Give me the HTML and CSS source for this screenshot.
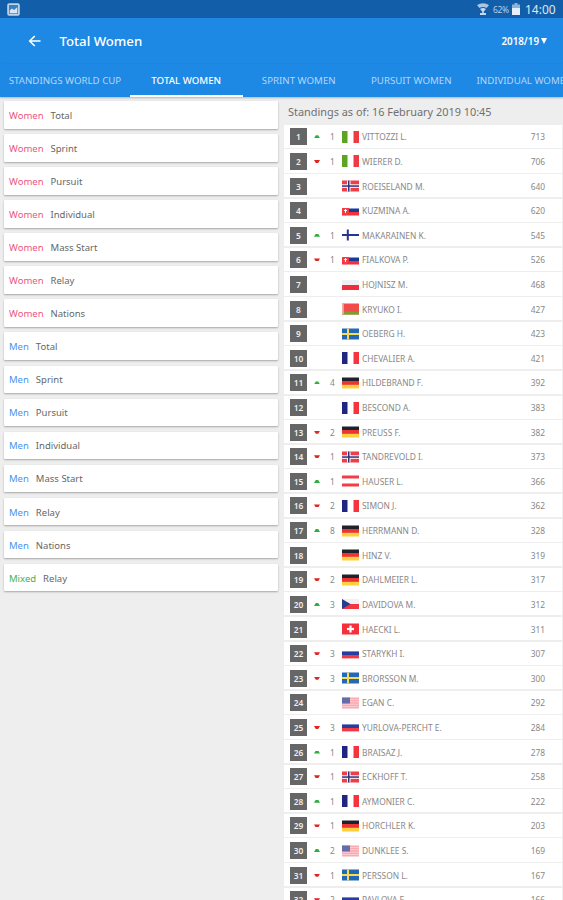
FILE: index.html
```html
<!DOCTYPE html>
<html lang="en">
<head>
    <meta charset="UTF-8">
    <meta name="viewport" content="width=device-width, initial-scale=1.0">
    <title>Total Women</title>
    <link rel="stylesheet" href="styles.css">
</head>
<body>
    <!-- Status bar -->
    <div class="status-bar">
        <svg class="icon-picture" viewBox="0 0 12 12"><rect x="1" y="1" width="10" height="10" rx="1" fill="#3f7fc0" stroke="#bcd3ea" stroke-width="1.6"/><path d="M2.5 9.5V7l2-2 2 1.5 3-2.5v5.5z" fill="#d6e5f4"/></svg>
        <div class="status-right">
            <svg class="icon-wifi" viewBox="0 0 12 12"><path d="M0 2Q6-1.6 12 2L9.6 5Q6 3 2.4 5z" fill="#a9c6e4"/><path d="M3 6Q6 4 9 6L6.8 8.6V10H9v2H3v-2h2.2V8.6z" fill="#c3d8ee"/></svg>
            <span class="percent">62%</span>
            <svg class="icon-battery" viewBox="0 0 8 12"><path d="M2.5 0h3v1.5H8V12H0V1.5h2.5z" fill="#8eb2d8"/><path d="M0 5h8v7H0z" fill="#e6f0fa"/></svg>
            <span class="clock">14:00</span>
        </div>
    </div>

    <header class="toolbar">
        <svg class="icon-back" viewBox="0 0 12 12"><path d="M6.3 1L1.2 6l5.1 5M1.5 6H12" fill="none" stroke="#fff" stroke-width="1.6"/></svg>
        <h1>Total Women</h1>
        <div class="season"><span>2018/19</span><i class="caret"></i></div>
    </header>

    <nav class="tabs">
        <a class="tab tab-first"><span>STANDINGS WORLD CUP</span></a>
        <a class="tab active"><span>TOTAL WOMEN</span></a>
        <a class="tab"><span>SPRINT WOMEN</span></a>
        <a class="tab"><span>PURSUIT WOMEN</span></a>
        <a class="tab tab-last"><span>INDIVIDUAL WOMEN</span></a>
    </nav>

    <main class="content">
        <div class="menu">
            <div class="card"><span class="women">Women</span><span>Total</span></div>
            <div class="card"><span class="women">Women</span><span>Sprint</span></div>
            <div class="card"><span class="women">Women</span><span>Pursuit</span></div>
            <div class="card"><span class="women">Women</span><span>Individual</span></div>
            <div class="card"><span class="women">Women</span><span>Mass Start</span></div>
            <div class="card"><span class="women">Women</span><span>Relay</span></div>
            <div class="card"><span class="women">Women</span><span>Nations</span></div>
            <div class="card"><span class="men">Men</span><span>Total</span></div>
            <div class="card"><span class="men">Men</span><span>Sprint</span></div>
            <div class="card"><span class="men">Men</span><span>Pursuit</span></div>
            <div class="card"><span class="men">Men</span><span>Individual</span></div>
            <div class="card"><span class="men">Men</span><span>Mass Start</span></div>
            <div class="card"><span class="men">Men</span><span>Relay</span></div>
            <div class="card"><span class="men">Men</span><span>Nations</span></div>
            <div class="card"><span class="mixed">Mixed</span><span>Relay</span></div>
        </div>
        <div class="standings">
            <h2>Standings as of: 16 February 2019 10:45</h2>
            <div id="rows"></div>
        </div>
    </main>

    <script src="script.js"></script>
</body>
</html>
```
FILE: styles.css
```css
body {
    font-family: "Noto Sans", sans-serif;
    margin: 0;
    height: 900px;
    overflow: hidden;
    background-color: #eee;
    color: #666;
}
svg {
    display: block;
}
.status-bar {
    display: flex;
    align-items: center;
    justify-content: space-between;
    height: 18px;
    padding: 0 7px;
    box-sizing: border-box;
    background-color: #135ea9;
    color: #dce9f6;
}
.icon-picture {
    width: 13px;
    height: 13px;
}
.status-right {
    display: flex;
    align-items: center;
}
.icon-wifi {
    width: 12px;
    height: 12px;
}
.percent {
    width: 17px;
    margin: 0 2px 0 4px;
    font-size: 8.5px;
    letter-spacing: -0.3px;
    color: #b5cfe9;
}
.icon-battery {
    width: 8px;
    height: 12px;
}
.clock {
    width: 31px;
    margin-left: 5px;
    padding-top: 2px;
    font-size: 12px;
    line-height: 18px;
    white-space: nowrap;
}
.toolbar {
    display: flex;
    align-items: center;
    height: 46px;
    padding: 0 16px 0 28px;
    background-color: #1e88e5;
    color: #fff;
}
.icon-back {
    width: 13px;
    height: 12px;
}
h1 {
    flex: 1;
    margin: 0 0 0 18.5px;
    font-size: 13.2px;
    font-weight: 500;
}
.season {
    display: flex;
    align-items: center;
    gap: 2px;
    font-size: 9.8px;
    font-weight: 600;
}
.caret {
    border-left: 3px solid transparent;
    border-right: 3px solid transparent;
    border-top: 6px solid #fff;
}
.tabs {
    display: flex;
    height: 33px;
    background-color: #1e88e5;
    box-shadow: 0 1px 2px rgba(0, 0, 0, 0.25);
    position: relative;
    overflow: hidden;
}
.tab {
    display: flex;
    flex: 0 0 112.5px;
    align-items: center;
    justify-content: center;
    box-sizing: border-box;
    padding-top: 2px;
    border-bottom: 2px solid transparent;
    font-size: 9.7px;
    color: #b5d6f6;
    white-space: nowrap;
}
.tab-first {
    flex-basis: 130px;
}
.tab-last {
    justify-content: flex-start;
    padding-left: 9px;
}
.tab.active {
    border-bottom-color: #fff;
    color: #fff;
    font-weight: 500;
}
.content {
    display: flex;
}
.menu {
    width: 274px;
    padding: 4px 6px 0 4px;
}
.card {
    display: flex;
    align-items: center;
    gap: 7px;
    height: 27.57px;
    box-sizing: border-box;
    margin-bottom: 5.5px;
    padding: 1px 0 0 5px;
    border-radius: 1px;
    background-color: #fff;
    box-shadow: 0 1px 2px rgba(0, 0, 0, 0.3);
    font-size: 9.5px;
}
.women {
    color: #ec5582;
}
.men {
    color: #4a92ee;
}
.mixed {
    color: #4caf50;
}
.standings {
    width: 277.5px;
}
h2 {
    height: 27.8px;
    margin: 0;
    padding-left: 4px;
    font-size: 10.9px;
    font-weight: 400;
    line-height: 30px;
    color: #707070;
}
.row {
    display: flex;
    align-items: center;
    height: 23.117px;
    box-sizing: border-box;
    margin-bottom: 1.5px;
    padding-top: 1px;
    background-color: #fff;
    font-size: 8.4px;
    color: #888;
}
.rank {
    width: 17px;
    height: 17px;
    margin-left: 6px;
    background-color: #666;
    color: #eee;
    font-weight: 600;
    line-height: 17px;
    text-align: center;
}
.arrow {
    width: 6px;
    height: 3px;
    margin-left: 7px;
}
.up {
    background-color: #2eae3c;
    clip-path: polygon(30% 0, 70% 0, 100% 100%, 0 100%);
}
.down {
    background-color: #e0241f;
    clip-path: polygon(0 0, 100% 0, 70% 100%, 30% 100%);
}
.change {
    width: 8px;
    margin-left: 8.5px;
    text-align: center;
}
.flag {
    width: 17px;
    height: 12px;
    margin-left: 5.5px;
}
.name {
    flex: 1;
    margin-left: 3px;
    white-space: nowrap;
}
.points {
    margin-right: 16.5px;
}
```
FILE: script.js
```js
const band = (x, y, w, h, fill) => `<rect x="${x}" y="${y}" width="${w}" height="${h}" fill="${fill}"/>`;
const flags = {
    ita: band(0, 0, 5.5, 12, '#5da423') + band(11.5, 0, 5.5, 12, '#f03a44'),
    fra: band(0, 0, 5.5, 12, '#20257f') + band(11.5, 0, 5.5, 12, '#f5343f'),
    nor: band(0, .5, 17, 11, '#ef3e48') + band(5, .5, 3.5, 11, '#fff') + band(0, 4.3, 17, 3.5, '#fff') + band(6, .5, 1.5, 11, '#29347c') + band(0, 5.3, 17, 1.5, '#29347c'),
    svk: band(0, 3.5, 17, 3.5, '#173a9b') + band(0, 7, 17, 3.5, '#f5303b') + '<path d="M0 3h7v3.5q0 2.5-3.500 4-3.500-1.500-3.500-4z" fill="#ef3e48"/><path d="M3.500 4v4M2 5.500h3" stroke="#fff"/>',
    fin: band(4.8, .5, 2, 11, '#29358d') + band(0, 5, 17, 2, '#29358d'),
    pol: band(0, 1, 17, 5, '#f0f0f2') + band(0, 6, 17, 5, '#f02d3c'),
    blr: band(0, .5, 17, 11, '#f34a4c') + band(0, 8.5, 17, 3, '#6fa52d') + band(0, .5, 1.8, 11, '#f6aaa4'),
    swe: band(0, .5, 17, 11, '#2568b4') + band(5, .5, 2, 11, '#f6dc57') + band(0, 5, 17, 2, '#f6dc57'),
    ger: band(0, .5, 17, 4, '#1d222b') + band(0, 4, 17, 4, '#ed3434') + band(0, 7.8, 17, 3.7, '#fecf3e'),
    aut: band(0, .5, 17, 3, '#f23c47') + band(0, 8.5, 17, 3, '#f23c47'),
    cze: band(0, 1, 17, 5, '#f0f0f2') + band(0, 6, 17, 5, '#f33641') + '<path d="M0 1l8.500 5L0 11z" fill="#263c8e"/>',
    sui: band(0, .5, 17, 11, '#f5303b') + band(7.4, 2.5, 2.2, 7, '#fff') + band(5, 4.9, 7, 2.2, '#fff'),
    rus: band(0, 3.4, 17, 3.6, '#253da0') + band(0, 7, 17, 3.4, '#ef3945'),
    usa: band(0, .5, 17, 11, '#f9aab0') + [2, 4.4, 6.8, 9.2].map(y => band(0, y, 17, .7, '#fbdcdf')).join('') + band(0, .5, 8, 6, '#666ba9')
};

// name, country, points, change against the previous race
const standings = [
    ['VITTOZZI L.', 'ita', 713, 1],
    ['WIERER D.', 'ita', 706, -1],
    ['ROEISELAND M.', 'nor', 640, 0],
    ['KUZMINA A.', 'svk', 620, 0],
    ['MAKARAINEN K.', 'fin', 545, 1],
    ['FIALKOVA P.', 'svk', 526, -1],
    ['HOJNISZ M.', 'pol', 468, 0],
    ['KRYUKO I.', 'blr', 427, 0],
    ['OEBERG H.', 'swe', 423, 0],
    ['CHEVALIER A.', 'fra', 421, 0],
    ['HILDEBRAND F.', 'ger', 392, 4],
    ['BESCOND A.', 'fra', 383, 0],
    ['PREUSS F.', 'ger', 382, -2],
    ['TANDREVOLD I.', 'nor', 373, -1],
    ['HAUSER L.', 'aut', 366, 1],
    ['SIMON J.', 'fra', 362, -2],
    ['HERRMANN D.', 'ger', 328, 8],
    ['HINZ V.', 'ger', 319, 0],
    ['DAHLMEIER L.', 'ger', 317, -2],
    ['DAVIDOVA M.', 'cze', 312, 3],
    ['HAECKI L.', 'sui', 311, 0],
    ['STARYKH I.', 'rus', 307, -3],
    ['BRORSSON M.', 'swe', 300, -3],
    ['EGAN C.', 'usa', 292, 0],
    ['YURLOVA-PERCHT E.', 'rus', 284, -3],
    ['BRAISAZ J.', 'fra', 278, 1],
    ['ECKHOFF T.', 'nor', 258, -1],
    ['AYMONIER C.', 'fra', 222, 1],
    ['HORCHLER K.', 'ger', 203, -1],
    ['DUNKLEE S.', 'usa', 169, 2],
    ['PERSSON L.', 'swe', 167, -1],
    ['PAVLOVA E.', 'rus', 166, -2]
];

document.getElementById('rows').innerHTML = standings.map(([name, country, points, change], i) => `
    <div class="row">
        <span class="rank">${i + 1}</span>
        <span class="arrow ${change > 0 ? 'up' : change < 0 ? 'down' : ''}"></span>
        <span class="change">${change ? Math.abs(change) : ''}</span>
        <svg class="flag" viewBox="0 0 17 12">${flags[country]}</svg>
        <span class="name">${name}</span>
        <span class="points">${points}</span>
    </div>`).join('');
```
